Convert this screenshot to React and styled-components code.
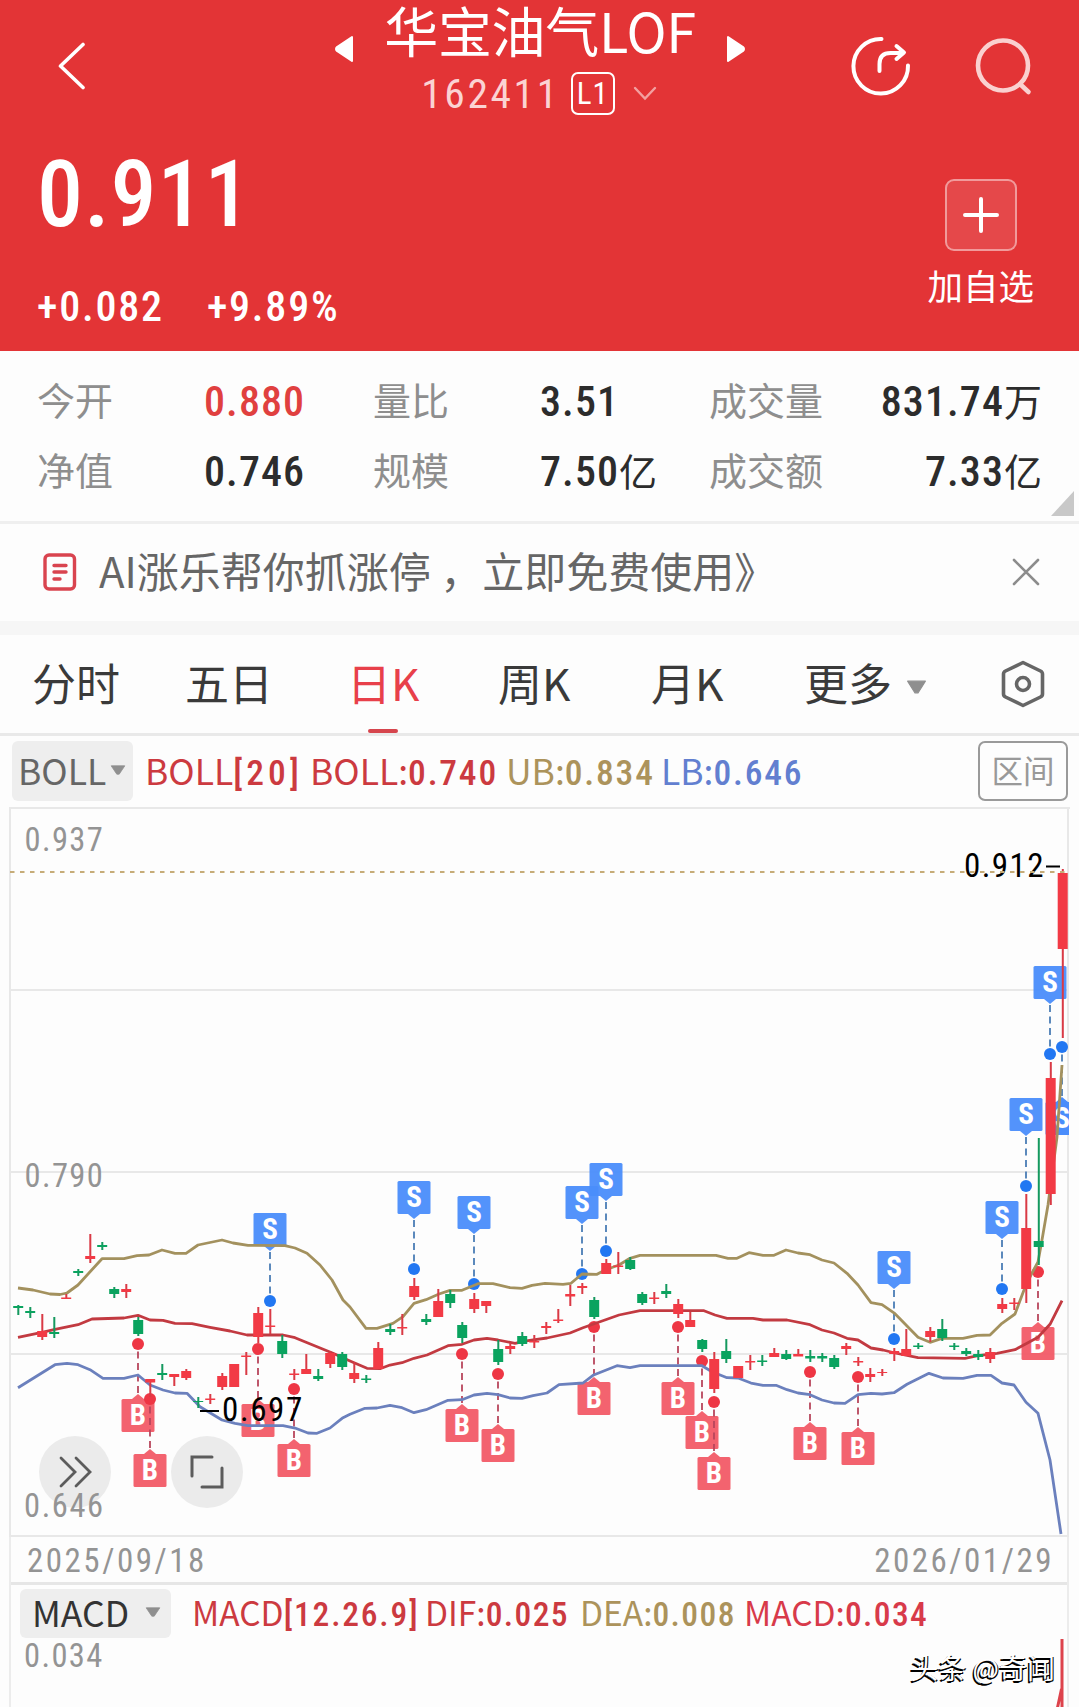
import React from "react";
import styled, { createGlobalStyle } from "styled-components";

const RED = "#f23a45";
const GREEN = "#0aa35f";
const CJK = `"Noto Sans CJK SC", "Noto Sans", sans-serif`;
const DIGITS = `"Roboto Condensed", Roboto, "Noto Sans CJK SC", sans-serif`;

const GlobalStyle = createGlobalStyle`
  * { box-sizing: border-box; }
  body { margin: 0; background: #fdfdfd; font-family: ${CJK}; }
`;

const Page = styled.main`
  width: 1079px;
  height: 1707px;
  overflow: hidden;
  background: #fdfdfd;
  display: flex;
  flex-direction: column;
`;

const Digits = styled.span`
  font-family: ${DIGITS};
  font-weight: ${(p) => p.$weight || 500};
  font-size: ${(p) => (p.$size ? `${p.$size}px` : "inherit")};
  letter-spacing: ${(p) => p.$spacing ?? 2.2}px;
  white-space: pre;
`;

/* ---------- header ---------- */

const Header = styled.header`
  height: 351px;
  flex: none;
  background: #e33436;
  color: #fff;
`;

const TopBar = styled.div`
  height: 130px;
  display: grid;
  grid-template-columns: 335px 410px 334px;
`;

const BackCell = styled.div`
  padding: 42px 0 0 57px;
`;

const TitleCell = styled.div`
  display: flex;
  justify-content: space-between;
`;

const Arrow = styled.svg`
  margin-top: 35px;
  display: block;
`;

const TitleBlock = styled.div`
  display: flex;
  flex-direction: column;
  align-items: center;
`;

const FundName = styled.h1`
  margin: 0;
  font-size: 54px;
  font-weight: 400;
  line-height: 59px;
  letter-spacing: -0.3px;
  white-space: nowrap;
`;

const CodeRow = styled.div`
  display: flex;
  align-items: center;
  height: 68px;
  padding-right: 2px;
  color: #fbd3d3;
`;

const LevelBadge = styled.span`
  width: 44px;
  height: 43px;
  margin: 0 18px 0 11px;
  border: 2px solid #fff;
  border-radius: 7px;
  color: #fff;
  display: flex;
  align-items: center;
  justify-content: center;
  font: 400 31px/1 ${DIGITS};
  letter-spacing: 1px;
`;

const ActionCell = styled.div`
  display: flex;
  justify-content: flex-end;
  gap: 58px;
  padding: 31px 41px 0 0;
`;

const QuoteBody = styled.div`
  display: flex;
  justify-content: space-between;
  padding: 0 45px 0 37px;
`;

const QuoteNumbers = styled.div`
  display: flex;
  flex-direction: column;
`;

const Price = styled.div`
  height: 126px;
  line-height: 130px;
`;

const ChangeRow = styled.div`
  display: flex;
  height: 100px;
  line-height: 101px;
  gap: 43px;
`;

const AddBlock = styled.div`
  display: flex;
  flex-direction: column;
  align-items: center;
  padding-top: 49px;
  font-size: 35.5px;
  line-height: 68px;
`;

const AddButton = styled.div`
  width: 72px;
  height: 72px;
  border: 2px solid rgba(255, 255, 255, 0.45);
  border-radius: 9px;
  background: rgba(255, 255, 255, 0.1);
  display: flex;
  align-items: center;
  justify-content: center;
`;

/* ---------- statistics ---------- */

const Stats = styled.section`
  position: relative;
  height: 173px;
  flex: none;
  padding: 14px 37px 0;
  border-bottom: 3px solid #efefef;
  display: grid;
  grid-template-columns: 167px 169px 167px 169px 114px 1fr;
  grid-template-rows: 70px 70px;
  font-size: 38px;
  line-height: 70px;
`;

const StatLabel = styled.span`
  color: #8e8e8e;
  line-height: 68px;
  white-space: nowrap;
`;

const StatValue = styled.span`
  color: ${(p) => (p.$up ? "#e0403f" : "#2c2c2c")};
  text-align: ${(p) => (p.$end ? "right" : "left")};
  white-space: nowrap;
`;

const Corner = styled.svg`
  position: absolute;
  right: 5px;
  bottom: 5px;
`;

/* ---------- banner ---------- */

const Banner = styled.section`
  height: 111px;
  flex: none;
  border-bottom: 14px solid #f6f6f6;
  padding: 0 39px 0 43px;
  display: flex;
  align-items: center;
  color: #666;
  > svg { margin-top: -2px; }
`;

const BannerText = styled.p`
  margin: -6px auto 0 22px;
  font-size: 42px;
  line-height: 90px;
  white-space: nowrap;
`;

/* ---------- period tabs ---------- */

const Tabs = styled.nav`
  height: 101px;
  flex: none;
  border-bottom: 3px solid #e9e9e9;
  padding: 0 34px 0 32px;
  display: flex;
  align-items: stretch;
  color: #3a3a3a;
`;

const Tab = styled.div`
  width: ${(p) => p.$width}px;
  height: 98px;
  font-size: 44px;
  line-height: 94px;
  white-space: nowrap;
  color: ${(p) => (p.$active ? "#e8404a" : "inherit")};
  display: flex;
  gap: 14px;
  > svg { margin-top: 45px; }
`;

const ActiveLabel = styled.span`
  display: flex;
  flex-direction: column;
  align-items: center;
  &::after {
    content: "";
    width: 30px;
    height: 4px;
    border-radius: 2px;
    background: #d6454d;
  }
`;

const SettingsIcon = styled.svg`
  margin: auto 0 auto auto;
`;

/* ---------- indicator rows ---------- */

const IndicatorRow = styled.div`
  flex: none;
  height: ${(p) => p.$height}px;
  padding: ${(p) => p.$padding};
  display: flex;
  align-items: flex-start;
`;

const Picker = styled.div`
  width: ${(p) => p.$width}px;
  height: ${(p) => p.$height}px;
  padding: 0 0 3px ${(p) => p.$inset}px;
  background: #eeeeee;
  border-radius: 6px;
  color: ${(p) => p.$color};
  display: flex;
  align-items: center;
  gap: ${(p) => p.$gap}px;
  font-size: ${(p) => p.$size}px;
  line-height: 1;
  svg { flex: none; }
`;

const Legend = styled.div`
  display: flex;
  align-items: center;
  height: ${(p) => p.$height}px;
  margin-left: ${(p) => p.$offset}px;
  font-size: ${(p) => p.$size}px;
  line-height: 1;
`;

const LegendItem = styled.span`
  color: ${(p) => p.$color};
  width: ${(p) => p.$width}px;
  white-space: nowrap;
`;

const RangeButton = styled.div`
  width: 90px;
  height: 60px;
  margin-left: auto;
  padding-bottom: 3px;
  border: 2px solid #9a9a9a;
  border-radius: 7px;
  color: #999;
  display: flex;
  align-items: center;
  justify-content: center;
  font-size: 31.5px;
  line-height: 1;
`;

/* ---------- chart ---------- */

const ChartArea = styled.section`
  position: relative;
  flex: none;
  height: 730px;
`;

const Plot = styled.svg`
  display: block;
`;

const RoundButton = styled.div`
  position: absolute;
  left: ${(p) => p.$left}px;
  top: 629px;
  width: 72px;
  height: 72px;
  border-radius: 50%;
  background: #ebebeb;
  display: flex;
  align-items: center;
  justify-content: center;
`;

const FloorLabel = styled.div`
  position: absolute;
  left: 24px;
  top: 679px;
  height: 40px;
  line-height: 40px;
  color: #949494;
`;

const Framed = styled.div`
  flex: none;
  margin: 0 10px 0 9px;
  border-left: 2px solid #ececec;
  border-right: 2px solid #ececec;
`;

const DateRow = styled.div`
  height: 48px;
  padding: 2px 13px 0 16px;
  border-bottom: 3px solid #e6e6e6;
  display: flex;
  align-items: center;
  justify-content: space-between;
  color: #949494;
`;

const MacdBody = styled.div`
  position: relative;
  height: 75px;
  padding-left: 13px;
  color: #949494;
  line-height: 39px;
`;

const MacdStroke = styled.svg`
  position: absolute;
  right: 0;
  top: 0;
`;

const Watermark = styled.div`
  position: absolute;
  right: 12px;
  top: 10px;
  font-size: 28px;
  line-height: 40px;
  color: #fff;
  white-space: nowrap;
  text-shadow: -1.5px 1.5px 0 #000, 1px 1px 0 #000;
`;

const upperBand =
  "18,1288 33,1290 50,1294 60,1294.5 67,1293 78,1285 102,1258.7 124,1258.7 137,1255.7 149,1255 162,1250 175,1253.3 186,1253.3 198,1245 222,1240 233,1243 248,1245.3 285,1245.7 295,1248 307,1253.3 320,1265 332,1280 343,1300 350,1307 366,1328.3 377,1328.3 393,1323.3 403,1316.7 414,1303.3 426,1299.7 439,1294 450,1290.3 462,1290.3 478,1283.7 493,1283.7 510,1287.7 522,1288.3 532,1285.3 545,1283.3 563,1284.3 571,1283.3 582,1274 597,1274.3 605,1270 619,1265 630,1258.3 640,1255.3 716,1255.3 728,1258.3 737,1258.3 749,1252.7 763,1255.3 774,1255.3 786,1250 798,1253 810,1254.7 822,1260 834,1263 847,1273.3 858,1285 871,1302.7 882,1304.7 895,1313.7 907,1326 918,1337.3 930,1342.3 942,1338.3 963,1338.3 977,1335.3 990,1335 1002,1323.3 1015,1314 1024,1290 1032,1273 1038,1262 1042,1240 1048,1205 1057,1137 1062,1065";
const middleBand =
  "18,1337.3 42,1332.3 55,1329.3 78,1324.7 92,1319 124,1318 138,1315.3 150,1320 163,1320.3 175,1323.3 192,1323.7 210,1327.3 230,1331 247,1335 283,1335 295,1337.7 333,1353.3 350,1361 367,1368.3 380,1368.7 390,1365 402,1362.7 414,1358.3 427,1355 448,1345.7 462,1344.3 474,1340 487,1338.3 498,1340 515,1343.3 528,1340.7 547,1338 570,1333 583,1327.7 600,1321.7 619,1315 640,1310.7 704,1310.7 715,1315 727,1318.3 753,1318.3 763,1320 787,1320 810,1324.7 822,1330 834,1333 847,1338.3 858,1340 871,1348 883,1350 895,1353 918,1357.7 965,1358.3 978,1355.7 997,1353.3 1015,1349.7 1027,1343.3 1038,1337.3 1050,1324.3 1062,1300.7";
const lowerBand =
  "18,1387.7 55,1364.7 67,1363.3 78,1364.7 90,1369.7 103,1378.3 124,1378.3 138,1375 150,1385 163,1390 175,1393 187,1393.3 200,1406.7 222,1420 235,1423.3 248,1425.7 283,1425.7 295,1428 308,1433 317,1433.3 330,1428 343,1417.7 350,1414.3 365,1408.3 377,1408 390,1405.3 402,1407.7 414,1412.7 426,1409.7 448,1400.3 462,1399.7 474,1395 487,1393.3 498,1394.7 510,1398 522,1398.3 533,1395.7 547,1393 559,1384.7 583,1383 593,1375.3 617,1365.7 630,1367.7 640,1365.7 702,1365.7 712,1371.7 727,1377.7 738,1378 751,1383 763,1385.3 776,1385.3 787,1389.7 798,1393 810,1394.7 822,1400 834,1403 845,1403.3 858,1394.7 871,1393.3 882,1394 894,1392.7 907,1384.3 929,1373.3 943,1378 963,1378.3 977,1375.3 991,1375.3 1002,1383 1014,1385 1026,1402.3 1038,1413.3 1050,1460 1061,1534";

/* one entry per trading day: [colour, high, low, body top, body bottom] */
const candles = [
  ["g", 1305, 1315, 1306, 1308], ["g", 1307, 1318, 1311, 1313], ["r", 1314, 1340, 1331, 1337], ["g", 1317, 1338, 1332, 1334],
  ["r", 1294, 1299, 1297.5, 1299], ["g", 1269, 1276, 1271, 1273], ["r", 1234, 1263, 1256, 1259], ["g", 1242, 1250, 1245, 1247],
  ["g", 1287, 1298, 1289, 1294], ["r", 1284, 1298, 1289, 1292], ["g", 1317, 1336, 1320, 1334], ["r", 1379, 1397, 1379, 1382.5],
  ["g", 1364, 1380, 1373, 1375], ["r", 1374, 1386, 1374, 1377], ["r", 1369, 1380, 1371, 1378], ["g", 1397, 1408, 1401, 1402],
  ["r", 1394, 1404, 1398.5, 1400], ["r", 1373, 1390, 1376, 1387], ["r", 1364, 1387, 1364, 1387], ["r", 1352, 1375, 1355.5, 1357],
  ["r", 1307, 1343, 1313, 1337], ["r", 1309, 1334, 1325.5, 1327], ["g", 1335, 1358, 1341, 1354], ["r", 1369, 1380, 1373.5, 1375],
  ["r", 1354, 1374, 1369, 1374], ["g", 1369, 1381, 1376, 1379], ["r", 1351, 1368, 1353, 1364], ["g", 1352, 1370, 1354, 1367],
  ["r", 1362, 1383, 1373, 1379], ["g", 1375, 1383, 1378.5, 1380], ["r", 1342, 1369, 1348, 1369], ["g", 1324, 1335, 1329, 1332],
  ["r", 1314, 1335, 1327, 1328.5], ["r", 1278, 1300, 1286, 1297], ["g", 1314, 1325, 1319, 1322], ["r", 1289, 1317, 1301, 1317],
  ["g", 1290, 1308, 1294, 1303], ["g", 1322, 1343, 1325, 1338], ["r", 1293, 1313, 1299, 1309], ["r", 1301, 1313, 1301, 1306],
  ["g", 1340, 1365, 1349, 1362], ["r", 1343, 1354, 1346, 1349], ["g", 1332, 1346, 1336, 1344], ["r", 1335, 1348, 1341, 1342.5],
  ["r", 1322, 1334, 1326, 1328], ["r", 1309, 1323, 1319.5, 1321], ["r", 1285, 1306, 1294, 1296.5], ["r", 1283, 1294, 1286, 1288],
  ["g", 1297, 1319, 1300, 1317], ["r", 1259, 1274, 1263, 1274], ["r", 1252, 1274, 1265.5, 1267], ["g", 1257, 1270, 1260, 1269],
  ["g", 1292, 1305, 1294, 1303], ["r", 1292, 1304, 1297.5, 1299], ["g", 1284, 1298, 1291, 1294], ["r", 1299, 1318, 1304, 1314],
  ["r", 1312, 1327, 1320, 1327], ["g", 1339, 1352, 1340, 1349], ["r", 1352, 1393, 1359, 1389], ["g", 1339, 1363, 1351, 1359],
  ["r", 1366, 1378, 1366, 1378], ["r", 1355, 1370, 1361, 1362.5], ["g", 1355, 1366, 1360.5, 1362], ["r", 1348, 1357, 1353, 1357],
  ["g", 1350, 1360, 1354, 1359], ["r", 1349, 1356, 1354, 1356.5], ["g", 1350, 1362, 1356, 1358.5], ["g", 1353, 1362, 1356, 1358.5],
  ["g", 1355, 1369, 1358, 1367], ["r", 1343, 1355, 1346, 1349], ["r", 1357, 1366, 1361, 1362.5], ["r", 1368, 1382, 1374, 1377],
  ["r", 1369, 1376, 1372, 1373], ["r", 1348, 1361, 1351, 1354], ["r", 1329, 1356, 1349, 1356], ["g", 1343, 1349, 1345.5, 1347],
  ["r", 1327, 1342, 1331, 1337], ["g", 1319, 1341, 1329, 1338], ["g", 1343, 1350, 1345.5, 1347], ["g", 1348, 1356, 1351, 1354],
  ["g", 1350, 1360, 1354, 1357], ["r", 1348, 1363, 1352, 1359], ["r", 1298, 1313, 1304, 1309], ["r", 1298, 1310, 1302.5, 1304],
  ["r", 1194, 1303, 1228, 1289], ["g", 1138, 1265, 1241, 1247], ["r", 1062, 1205, 1078, 1194], ["r", 869, 1038, 873, 949],
];

/* [x, y of the dot] */
const buys = [
  [138, 1344], [150, 1399], [258, 1349], [294, 1389], [462, 1354], [498, 1374], [594, 1327],
  [678, 1327], [702, 1361], [714, 1402], [810, 1372], [858, 1377], [1038, 1272],
];
const sells = [
  [270, 1301], [414, 1269], [474, 1284], [582, 1274], [606, 1251], [894, 1339], [1002, 1289], [1026, 1186], [1050, 1054],
];

function Signal({ x, y, letter, fill, dot, line, dir }) {
  const near = y + dir * 55;
  const top = dir > 0 ? near : near - 33;
  return (
    <g>
      <rect x={x - 16.5} y={top} width="33" height="33" rx="1.5" fill={fill} opacity="0.95" />
      <path d={`M${x - 6} ${near} l6 ${-5 * dir} l6 ${5 * dir} z`} fill={fill} opacity="0.95" />
      <text x={x} y={top + 26} textAnchor="middle" fontSize="29" fontWeight="700" fontFamily={DIGITS} fill="#fff">{letter}</text>
      <path d={`M${x} ${y + dir * 49} V${y}`} stroke={line} strokeWidth="1.8" strokeDasharray="7 4.5" />
      <circle cx={x} cy={y} r="6" fill={dot} />
    </g>
  );
}

function Candle({ x, data: [kind, high, low, top, bottom] }) {
  const color = kind === "r" ? RED : GREEN;
  return (
    <g fill={color}>
      <rect x={x - 0.7} y={high} width="2" height={low - high} fill={kind === "r" ? "#d93a45" : "#15995f"} />
      <rect x={x - 4.8} y={top} width="10" height={bottom - top} />
    </g>
  );
}

function Chart() {
  const buy = { letter: "B", fill: "#f25b67", dot: "#ee3644", line: "#b8465c", dir: 1 };
  const sell = { letter: "S", fill: "#4a8dfb", dot: "#2277f2", line: "#4a7db5", dir: -1 };
  return (
    <Plot width="1079" height="730" viewBox="0 807 1079 730">
      <defs>
        <clipPath id="plot"><rect x="10" y="808" width="1059" height="730" /></clipPath>
      </defs>
      <g stroke="#e8e8e8" strokeWidth="2">
        <path d="M9 807.5H1070" strokeWidth="3" />
        <path d="M10 990H1068M10 1172H1068M10 1354H1068M10 1536H1068" />
        <path d="M10 808V1537M1068 808V1537" />
      </g>
      <g fontFamily={DIGITS} fontSize="32.5" fontWeight="400" fill="#949494">
        <text x="24.5" y="851" letterSpacing="1.4">0.937</text>
        <text x="24.5" y="1187" letterSpacing="1.4">0.790</text>
      </g>
      <g clipPath="url(#plot)">
        {buys.map(([x, y]) => <Signal key={x} x={x} y={y} {...buy} />)}
        {sells.map(([x, y]) => <Signal key={x} x={x} y={y} {...sell} />)}
        <rect x="1045.5" y="1102" width="33" height="33" rx="1.5" fill="#4a8dfb" />
        <path d="M1056 1102l6 -5l6 5z" fill="#4a8dfb" />
        <text x="1062" y="1128" textAnchor="middle" fontSize="29" fontWeight="700" fontFamily={DIGITS} fill="#fff">S</text>
        <path d="M1062 1096V1047" stroke="#4a7db5" strokeWidth="1.8" strokeDasharray="7 4.5" />
        <circle cx="1062" cy="1047" r="6" fill="#2277f2" />
        <g fill="none" strokeWidth="2.8" strokeLinejoin="round">
          <polyline points={upperBand} stroke="#a3915e" />
          <polyline points={middleBand} stroke="#c23a41" />
          <polyline points={lowerBand} stroke="#6b80bd" />
        </g>
        {candles.map((data, i) => <Candle key={i} x={18 + i * 12 + (i > 84 ? 0.5 : 0)} data={data} />)}
      </g>
      <g fontFamily={DIGITS} fontSize="33" fontWeight="400" fill="#000">
        <text x="964" y="877" letterSpacing="1.4">0.912</text>
        <text x="222" y="1421" letterSpacing="1.6">0.697</text>
      </g>
      <path d="M1046 866.5H1060M200 1411H219" stroke="#000" strokeWidth="2" />
      <path d="M10 872H1068" stroke="#c6ac78" strokeWidth="1.8" strokeDasharray="4.5 5.5" />
    </Plot>
  );
}

function Caret({ width, height, color = "#8f8f8f" }) {
  return (
    <svg width={width} height={height} viewBox="0 0 20 12" preserveAspectRatio="none">
      <path d="M1.5 1h17L11.5 11h-3z" fill={color} stroke={color} strokeLinejoin="round" />
    </svg>
  );
}

const stats = [
  ["今开", "0.880", "", true], ["量比", "3.51", ""], ["成交量", "831.74", "万"],
  ["净值", "0.746", ""], ["规模", "7.50", "亿"], ["成交额", "7.33", "亿"],
];

export default function App() {
  return (
    <Page>
      <GlobalStyle />
      <Header>
        <TopBar>
          <BackCell>
            <svg width="30" height="49" viewBox="0 0 30 49" fill="none" stroke="#fff" strokeWidth="3.6" strokeLinecap="round" strokeLinejoin="round">
              <path d="M26 2.500L3.500 24L26 45.500" />
            </svg>
          </BackCell>
          <TitleCell>
            <Arrow width="19" height="28" viewBox="0 0 19 28"><path d="M17 2v24L2 16q-2-2 0-4z" fill="#fff" stroke="#fff" strokeWidth="2" strokeLinejoin="round" /></Arrow>
            <TitleBlock>
              <FundName>华宝油气LOF</FundName>
              <CodeRow>
                <Digits $size={41.5} $weight={400} $spacing={2.6}>162411</Digits>
                <LevelBadge>L1</LevelBadge>
                <svg width="24" height="15" viewBox="0 0 24 15" fill="none" stroke="#f3a0a0" strokeWidth="2.4" strokeLinecap="round"><path d="M2 2l10 10.500L22 2" /></svg>
              </CodeRow>
            </TitleBlock>
            <Arrow width="19" height="28" viewBox="0 0 19 28"><path d="M2 2v24L17 16q2-2 0-4z" fill="#fff" stroke="#fff" strokeWidth="2" strokeLinejoin="round" /></Arrow>
          </TitleCell>
          <ActionCell>
            <svg width="70" height="70" viewBox="846 31 70 70" fill="none" stroke="#fff" strokeWidth="4" strokeLinecap="round" strokeLinejoin="round">
              <path d="M881.500 39A27.300 27.300 0 1 0 908 65.500" />
              <path d="M879.500 71V64q0-11 11-11h12" />
              <path d="M896.500 46l7.500 6.500-7.500 6.500" />
            </svg>
            <svg width="64" height="70" viewBox="974 31 64 70" fill="none" stroke="#fad0cf" strokeWidth="4.6" strokeLinecap="round">
              <circle cx="1003" cy="65.500" r="25" />
              <path d="M1020 84l8.500 8" />
            </svg>
          </ActionCell>
        </TopBar>
        <QuoteBody>
          <QuoteNumbers>
            <Price><Digits $size={92} $weight={500} $spacing={1}>0.911</Digits></Price>
            <ChangeRow>
              <Digits $size={42} $spacing={1.8}>+0.082</Digits>
              <Digits $size={42} $spacing={1.8}>+9.89%</Digits>
            </ChangeRow>
          </QuoteNumbers>
          <AddBlock>
            <AddButton>
              <svg width="38" height="38" viewBox="0 0 38 38" stroke="#fff" strokeWidth="4" strokeLinecap="round"><path d="M3 19h32M19 3v32" /></svg>
            </AddButton>
            加自选
          </AddBlock>
        </QuoteBody>
      </Header>

      <Stats>
        {stats.map(([label, value, unit, up], i) => (
          <React.Fragment key={label}>
            <StatLabel>{label}</StatLabel>
            <StatValue $up={up} $end={i % 3 === 2}><Digits $size={42} $spacing={1.1}>{value}</Digits>{unit}</StatValue>
          </React.Fragment>
        ))}
        <Corner width="23" height="25" viewBox="0 0 23 25"><path d="M23 0v25H0z" fill="#c8c8c8" /></Corner>
      </Stats>

      <Banner>
        <svg width="34" height="38" viewBox="0 0 34 38" fill="none" stroke="#d9444f" strokeWidth="3.400" strokeLinecap="round">
          <rect x="2" y="2" width="29.500" height="34" rx="4" />
          <path d="M11 12.500h12M11 19h12M11 26h6" />
        </svg>
        <BannerText>AI涨乐帮你抓涨停 ，立即免费使用》</BannerText>
        <svg width="28" height="28" viewBox="0 0 28 28" stroke="#8c8c8c" strokeWidth="2.600" strokeLinecap="round"><path d="M2 2l24 24M26 2L2 26" /></svg>
      </Banner>

      <Tabs>
        <Tab $width={153}>分时</Tab>
        <Tab $width={162}>五日</Tab>
        <Tab $width={151} $active><ActiveLabel>日K</ActiveLabel></Tab>
        <Tab $width={153}>周K</Tab>
        <Tab $width={153}>月K</Tab>
        <Tab $width={140}>更多<Caret width={21} height={14} /></Tab>
        <SettingsIcon width="44" height="48" viewBox="0 0 44 48" fill="none" stroke="#666" strokeWidth="3.600" strokeLinejoin="round">
          <path d="M22 2.500L39.500 11Q41.500 12 41.500 14V34Q41.500 36 39.500 37L22 45.500L4.500 37Q2.500 36 2.500 34V14Q2.500 12 4.500 11Z" />
          <circle cx="22" cy="24" r="6.500" />
        </SettingsIcon>
      </Tabs>

      <IndicatorRow $height={71} $padding="5px 11px 0 12px">
        <Picker $width={121} $height={60} $inset={6} $gap={4} $size={35.5} $color="#666">BOLL<Caret width={16} height={10} /></Picker>
        <Legend $height={61} $offset={12} $size={35.5}>
          <LegendItem $color="#cc3a40" $width={165}>BOLL<Digits $spacing={4}>[20]</Digits></LegendItem>
          <LegendItem $color="#cc3a40" $width={196}>BOLL:<Digits $spacing={1.8}>0.740</Digits></LegendItem>
          <LegendItem $color="#ac935b" $width={155}>UB:<Digits $spacing={1.8}>0.834</Digits></LegendItem>
          <LegendItem $color="#627fd0" $width={145}>LB:<Digits $spacing={1.8}>0.646</Digits></LegendItem>
        </Legend>
        <RangeButton>区间</RangeButton>
      </IndicatorRow>

      <ChartArea>
        <Chart />
        <RoundButton $left={39}>
          <svg width="34" height="34" viewBox="0 0 34 34" fill="none" stroke="#5c5c5c" strokeWidth="2.800" strokeLinecap="round"><path d="M3 3l14 14L3 31M18 3l14 14L18 31" /></svg>
        </RoundButton>
        <RoundButton $left={171}>
          <svg width="34" height="34" viewBox="0 0 34 34" fill="none" stroke="#5c5c5c" strokeWidth="3" strokeLinecap="round"><path d="M22 2H2v19M12 32h20V13" /></svg>
        </RoundButton>
        <FloorLabel><Digits $size={32.5} $weight={400} $spacing={1.6}>0.646</Digits></FloorLabel>
      </ChartArea>

      <Framed>
        <DateRow>
          <Digits $size={33} $weight={400} $spacing={2.5}>2025/09/18</Digits>
          <Digits $size={33} $weight={400} $spacing={2.5}>2026/01/29</Digits>
        </DateRow>
        <IndicatorRow $height={52} $padding="4px 0 0 9px">
          <Picker $width={151} $height={49} $inset={12} $gap={16} $size={35.5} $color="#333">MACD<Caret width={16} height={10} /></Picker>
          <Legend $height={48} $offset={21} $size={33.5}>
            <LegendItem $color="#cc3a40" $width={233}>MACD<Digits $spacing={1.8}>[12.26.9]</Digits></LegendItem>
            <LegendItem $color="#cc3a40" $width={155}>DIF:<Digits $spacing={1.4}>0.025</Digits></LegendItem>
            <LegendItem $color="#ac935b" $width={164}>DEA:<Digits $spacing={1.4}>0.008</Digits></LegendItem>
            <LegendItem $color="#d83a4a" $width={180}>MACD:<Digits $spacing={1.4}>0.034</Digits></LegendItem>
          </Legend>
        </IndicatorRow>
        <MacdBody>
          <Digits $size={32.5} $weight={400} $spacing={1.4}>0.034</Digits>
          <MacdStroke width="20" height="75" viewBox="1047 1636 20 71"><path d="M1062 1636V1707M1061.500 1686L1057 1707" stroke="#dd434c" strokeWidth="3" fill="none" /></MacdStroke>
          <Watermark>头条 @奇闻</Watermark>
        </MacdBody>
      </Framed>
    </Page>
  );
}
